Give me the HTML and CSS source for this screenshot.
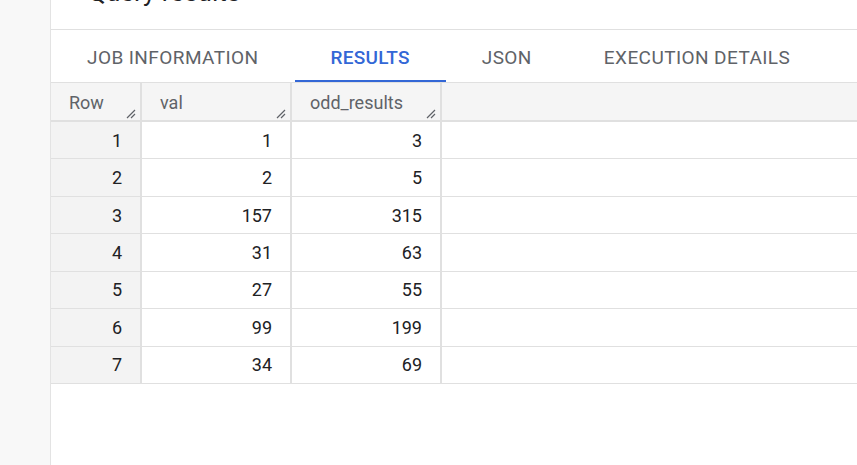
FILE: index.html
```html
<!DOCTYPE html>
<html>
<head>
<meta charset="utf-8">
<link rel="stylesheet" href="styles.css">
</head>
<body>
<div class="sidebar"></div>
<div class="main">
  <div class="title-bar"><h1 class="title">Query results</h1></div>
  <div class="tabs">
    <div class="tab">JOB INFORMATION</div>
    <div class="tab active">RESULTS</div>
    <div class="tab">JSON</div>
    <div class="tab">EXECUTION DETAILS</div>
  </div>
  <div class="table">
    <div class="row head">
      <div class="cell hcell rowhead">Row<svg class="grip" viewBox="0 0 10 10"><path d="M1 9 L9 1 M5 9 L9 5" /></svg></div>
      <div class="cell hcell">val<svg class="grip" viewBox="0 0 10 10"><path d="M1 9 L9 1 M5 9 L9 5" /></svg></div>
      <div class="cell hcell">odd_results<svg class="grip" viewBox="0 0 10 10"><path d="M1 9 L9 1 M5 9 L9 5" /></svg></div>
      <div class="cell filler"></div>
    </div>
    <div class="row"><div class="cell num rownum">1</div><div class="cell num">1</div><div class="cell num">3</div><div class="cell filler"></div></div>
    <div class="row"><div class="cell num rownum">2</div><div class="cell num">2</div><div class="cell num">5</div><div class="cell filler"></div></div>
    <div class="row"><div class="cell num rownum">3</div><div class="cell num">157</div><div class="cell num">315</div><div class="cell filler"></div></div>
    <div class="row"><div class="cell num rownum">4</div><div class="cell num">31</div><div class="cell num">63</div><div class="cell filler"></div></div>
    <div class="row"><div class="cell num rownum">5</div><div class="cell num">27</div><div class="cell num">55</div><div class="cell filler"></div></div>
    <div class="row"><div class="cell num rownum">6</div><div class="cell num">99</div><div class="cell num">199</div><div class="cell filler"></div></div>
    <div class="row"><div class="cell num rownum">7</div><div class="cell num">34</div><div class="cell num">69</div><div class="cell filler"></div></div>
  </div>
</div>
</body>
</html>
```

FILE: styles.css
```css
html, body {
  margin: 0;
  padding: 0;
  height: 100%;
  background: #ffffff;
  font-family: Roboto, "Liberation Sans", sans-serif;
  overflow: hidden;
}
body {
  display: flex;
}
.sidebar {
  width: 50px;
  flex: 0 0 50px;
  background: #f8f8f8;
  border-right: 1px solid #e3e3e3;
}
.main {
  flex: 1;
  display: flex;
  flex-direction: column;
  min-width: 0;
}
.title-bar {
  height: 29px;
  border-bottom: 1px solid #e0e0e0;
  overflow: hidden;
  padding-left: 37px;
}
.title {
  margin: -23px 0 0 0;
  font-size: 26px;
  font-weight: 400;
  line-height: 30px;
  color: #202124;
}
.tabs {
  height: 52px;
  display: flex;
  border-bottom: 1px solid #e0e0e0;
}
.tab {
  padding: 0 36px;
  display: flex;
  align-items: center;
  font-size: 19px;
  font-weight: 400;
  letter-spacing: 0.42px;
  color: #5f6368;
  border-bottom: 2px solid transparent;
  padding-top: 4px;
}
.tab.active {
  color: #3367d6;
  font-weight: 500;
  letter-spacing: 0.25px;
  border-bottom-color: #3367d6;
}
.table {
  display: flex;
  flex-direction: column;
}
.row {
  display: grid;
  grid-template-columns: 91px 150px 150px 1fr;
  height: 37.43px;
  box-sizing: border-box;
  border-bottom: 1px solid #e0e0e0;
}
.row.head {
  height: 39px;
  background: #f5f5f5;
  border-bottom: 2px solid #e0e0e0;
}
.cell {
  box-sizing: border-box;
  border-right: 2px solid #e0e0e0;
  display: flex;
  align-items: center;
  font-size: 18px;
  color: #202124;
}
.cell.filler {
  border-right: none;
}
.hcell {
  position: relative;
  padding-left: 18px;
  color: #5f6368;
  padding-top: 1px;
}
.num {
  justify-content: flex-end;
  padding-right: 18px;
}
.rownum {
  background: #f3f3f3;
}
.grip {
  position: absolute;
  right: 4px;
  bottom: 1px;
  width: 10px;
  height: 10px;
  stroke: #5f6368;
  stroke-width: 1.2;
  fill: none;
}
```
